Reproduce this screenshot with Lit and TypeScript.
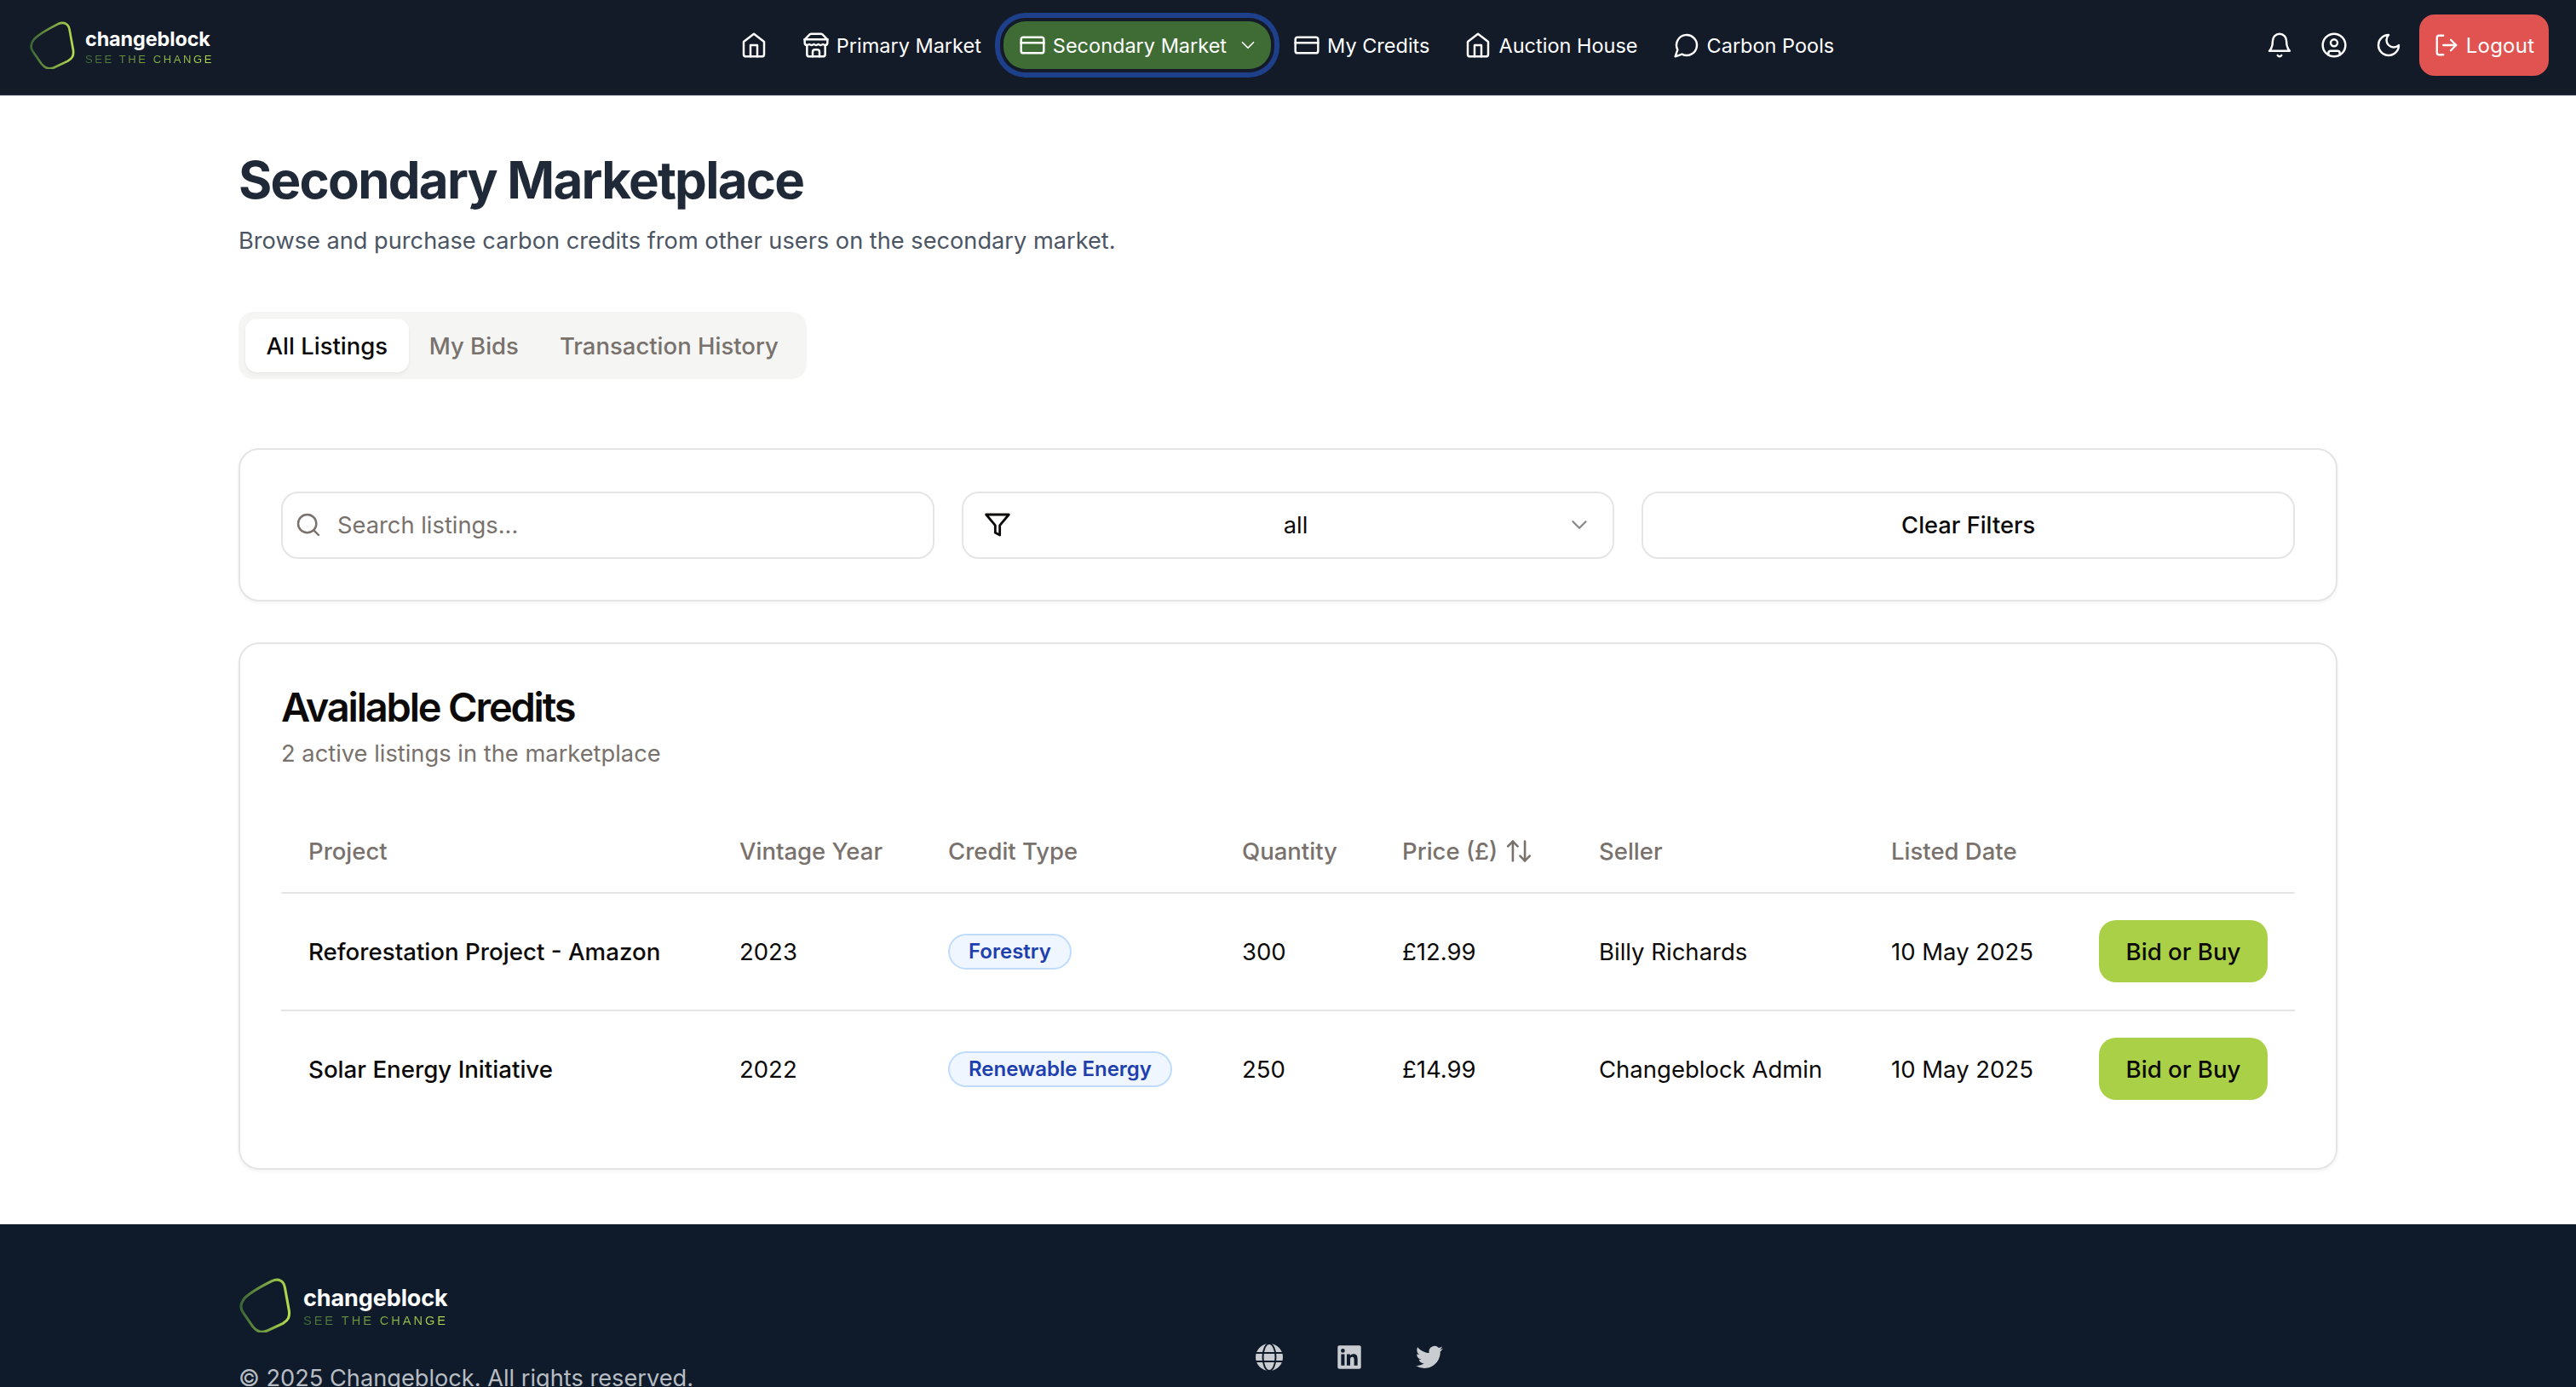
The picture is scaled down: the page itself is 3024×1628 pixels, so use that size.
import { LitElement, html, css, svg } from "lit";
import { customElement } from "lit/decorators.js";

const ic = (body: unknown, cls = "ic") => html`<svg class=${cls} viewBox="0 0 24 24" fill="none" stroke="currentColor" stroke-width="2" stroke-linecap="round" stroke-linejoin="round">${body}</svg>`;

const homeI = svg`<path d="m3 9 9-7 9 7v11a2 2 0 0 1-2 2H5a2 2 0 0 1-2-2z"/><path d="M9 22V12h6v10"/>`;
const storeI = svg`<path d="m2 7 4.41-4.41A2 2 0 0 1 7.83 2h8.34a2 2 0 0 1 1.42.59L22 7"/><path d="M4 12v8a2 2 0 0 0 2 2h12a2 2 0 0 0 2-2v-8"/><path d="M15 22v-4a2 2 0 0 0-2-2h-2a2 2 0 0 0-2 2v4"/><path d="M2 7h20"/><path d="M22 7v3a2 2 0 0 1-2 2 2.7 2.7 0 0 1-1.59-.63.7.7 0 0 0-.82 0A2.7 2.7 0 0 1 16 12a2.7 2.7 0 0 1-1.59-.63.7.7 0 0 0-.82 0A2.7 2.7 0 0 1 12 12a2.7 2.7 0 0 1-1.59-.63.7.7 0 0 0-.82 0A2.7 2.7 0 0 1 8 12a2.7 2.7 0 0 1-1.59-.63.7.7 0 0 0-.82 0A2.7 2.7 0 0 1 4 12a2 2 0 0 1-2-2V7"/>`;
const cardI = svg`<rect x="2" y="5" width="20" height="14" rx="2"/><path d="M2 10h20"/>`;
const msgI = svg`<path d="M7.9 20A9 9 0 1 0 4 16.1L2 22Z"/>`;
const bellI = svg`<path d="M6 8a6 6 0 0 1 12 0c0 7 3 9 3 9H3s3-2 3-9"/><path d="M10.3 21a1.94 1.94 0 0 0 3.4 0"/>`;
const userI = svg`<circle cx="12" cy="12" r="10"/><circle cx="12" cy="10" r="3"/><path d="M7 20.66V19a2 2 0 0 1 2-2h6a2 2 0 0 1 2 2v1.66"/>`;
const moonI = svg`<path d="M12 3a6 6 0 0 0 9 9 9 9 0 1 1-9-9Z"/>`;
const logoutI = svg`<path d="M9 21H5a2 2 0 0 1-2-2V5a2 2 0 0 1 2-2h4"/><path d="m16 17 5-5-5-5"/><path d="M21 12H9"/>`;
const searchI = svg`<circle cx="11" cy="11" r="8"/><path d="m21 21-4.3-4.3"/>`;
const filterI = svg`<path d="M22 3H2l8 9.46V19l4 2v-8.54Z"/>`;
const chevI = svg`<path d="m6 9 6 6 6-6"/>`;
const sortI = svg`<path d="m21 16-4 4-4-4"/><path d="M17 20V4"/><path d="m3 8 4-4 4 4"/><path d="M7 4v16"/>`;

const logo = (id: string) => html`<svg class="mark" viewBox="0 0 54 54" fill="none">
  <defs><linearGradient id=${id} x1="0" y1="0" x2="1" y2="0">
    <stop offset="0" stop-color="#3b6636"/><stop offset="1" stop-color="#b4dc4f"/></linearGradient></defs>
  <path d="M6 20C13 13 25 7 33 3C40 0 45 3 46 10L50 32C51 39 49 42 44 45L29 52C23 55 18 53 14 48L5 35C1 30 2 25 6 20Z" stroke="url(#${id})" stroke-width="2.6"/>
</svg>`;

const rows = [
  { p: "Reforestation Project - Amazon", y: "2023", t: "Forestry", q: "300", pr: "£12.99", s: "Billy Richards", d: "10 May 2025" },
  { p: "Solar Energy Initiative", y: "2022", t: "Renewable Energy", q: "250", pr: "£14.99", s: "Changeblock Admin", d: "10 May 2025" },
];

@customElement("app-root")
export class AppRoot extends LitElement {
  static styles = css`
    :host { display: block; width: 3024px; height: 1628px; overflow: hidden; background: #fff; font-family: Inter, "Liberation Sans", sans-serif; color: #0c0a09; font-size: 27px; }
    * { box-sizing: border-box; }
    .ic { width: 32px; height: 32px; flex: none; stroke-width: 1.85; }

    header { height: 112px; padding-bottom: 4px; border-bottom: 2px solid #1d2433; background: #131a28; display: grid; grid-template-columns: 1fr auto 1fr; align-items: center; color: #fff; }
    .brand { display: flex; align-items: center; gap: 10px; padding-left: 34px; }
    .mark { width: 56px; height: 56px; flex: none; }
    .words { display: flex; flex-direction: column; }
    .name { font-weight: 700; font-size: 23.4px; line-height: 28px; margin-top: 3px; letter-spacing: -0.1px; color: #fff; }
    .tag { font-size: 13px; line-height: 16px; letter-spacing: 2.6px; margin-top: 2px; font-family: "Liberation Sans", sans-serif; background: linear-gradient(90deg, #3f6a38, #b4dc4f); -webkit-background-clip: text; background-clip: text; color: transparent; white-space: nowrap; }
    nav { display: flex; align-items: center; gap: 17px; margin-left: -2px; }
    .item { display: flex; align-items: center; gap: 8px; height: 56px; padding: 0 12px; border-radius: 26px; font-size: 23.5px; white-space: nowrap; color: #fff; }
    .item.active { padding: 0 14px 0 18px; margin: 0 -3px; background: #3f6b35; box-shadow: 0 0 0 4px #141a28, 0 0 0 10px #1e3f8a; }
    .chev { width: 26px; height: 26px; flex: none; margin-left: 4px; stroke-width: 1.6; }
    .right { display: flex; align-items: center; justify-content: flex-end; padding-right: 32px; }
    .tool { width: 32px; height: 32px; margin-right: 32px; }
    .tool:nth-child(3) { margin-right: 20px; }
    .logout { height: 72px; width: 152px; border-radius: 18px; background: #e05350; display: flex; align-items: center; justify-content: center; gap: 8px; font-size: 24px; letter-spacing: 0.25px; color: #fff; }
    .logout .ic { width: 30px; height: 30px; }

    main { padding: 64px 280px 64px; }
    h1 { margin: 0; font-size: 60px; line-height: 71px; font-weight: 700; letter-spacing: -1.75px; color: #1f2937; }
    .lead { margin: 15px 0 0; font-size: 27.2px; line-height: 41px; color: #4b5563; }
    .tabs { margin-top: 63px; width: 667px; height: 79px; padding: 8px; border-radius: 18px; background: #f5f5f4; display: flex; align-items: center; }
    .tab { height: 63px; padding: 0 24.5px; display: flex; align-items: center; border-radius: 14px; color: #78716c; font-size: 27.5px; font-weight: 500; white-space: nowrap; }
    .tab:not(.on) { padding: 0 24px; }
    .tab.on { background: #fff; color: #0c0a09; box-shadow: 0 2px 4px rgba(0,0,0,.06); }

    .card { border: 2px solid #e5e5e5; border-radius: 24px; background: #fff; box-shadow: 0 2px 4px rgba(0,0,0,.05); padding: 48px; }
    .filters { margin-top: 81px; height: 180px; display: grid; grid-template-columns: repeat(3, 1fr); gap: 32px; align-items: center; }
    .ctl { height: 79px; border: 2px solid #e5e5e5; border-radius: 20px; display: flex; align-items: center; position: relative; font-size: 27.3px; }
    .search { padding-left: 14px; gap: 18px; color: #78716c; }
    .search .ic { width: 32px; height: 32px; }
    .select { padding: 0 24px; justify-content: space-between; }
    .select .ic { width: 32px; height: 32px; color: #0c0a09; stroke-width: 2.1; }
    .select .sv { flex: 1; text-align: center; padding-left: 16px; }
    .select .chev { width: 30px; height: 30px; margin: 0; color: #8a8a8a; stroke-width: 1.85; }
    .clear { justify-content: center; font-weight: 500; }

    .list { margin-top: 48px; height: 619px; }
    h2 { margin: 0; font-size: 47px; line-height: 52px; font-weight: 600; letter-spacing: -2.2px; color: #0c0a09; }
    .sub { margin-top: 14px; font-size: 27.3px; line-height: 30px; color: #78716c; }
    table { margin-top: 50px; width: 100%; table-layout: fixed; border-collapse: collapse; }
    .c1 { width: 506px; } .c2 { width: 245px; } .c3 { width: 345px; } .c4 { width: 188px; }
    .c5 { width: 231px; } .c6 { width: 343px; } .c7 { width: 244px; } .c8 { width: 262px; }
    th { height: 98px; padding: 1px 32px 0; text-align: left; font-weight: 500; color: #78716c; font-size: 27.5px; border-bottom: 2px solid #e5e5e5; white-space: nowrap; }
    th .in { display: inline-flex; align-items: center; gap: 8px; }
    th .ic { width: 34px; height: 34px; }
    td { height: 137.5px; padding: 0 32px; font-size: 27.5px; border-bottom: 2px solid #e5e5e5; white-space: nowrap; }
    tbody tr:last-child td { border-bottom: none; }
    td.proj { font-weight: 500; font-size: 27.7px; }
    .badge { display: inline-block; padding: 0 22px; height: 42px; line-height: 38px; border-radius: 21px; border: 2px solid #bfdbfe; background: #eff6ff; color: #1e40af; font-size: 24px; font-weight: 600; }
    .buy { width: 198px; height: 73px; border-radius: 20px; background: #a9d046; color: #0c0a09; display: flex; align-items: center; justify-content: center; font-weight: 500; font-size: 27.6px; }

    footer { height: 191px; background: #0f1b2a; padding: 65px 0 0 280px; display: grid; grid-template-columns: 1194px auto; align-items: start; }
    footer .brand { padding-left: 0; gap: 12px; }
    footer .mark { width: 64px; height: 64px; margin-top: -2px; }
    footer .name { font-size: 27px; line-height: 32px; margin-top: 0; }
    footer .tag { font-size: 14.6px; letter-spacing: 2.95px; margin-top: 2px; }
    .copy { margin: 34px 0 0; font-size: 27.2px; line-height: 40px; color: #b8bcc3; white-space: nowrap; }
    .social { display: flex; gap: 62px; padding-top: 75px; color: #c9ccd1; }
    .social svg { width: 32px; height: 32px; display: block; fill: currentColor; }
  `;

  render() {
    return html`
      <header>
        <div class="brand">${logo("g1")}<div class="words"><span class="name">changeblock</span><span class="tag">SEE THE CHANGE</span></div></div>
        <nav>
          <div class="item">${ic(homeI)}</div>
          <div class="item">${ic(storeI)}Primary Market</div>
          <div class="item active">${ic(cardI)}Secondary Market${ic(chevI, "chev")}</div>
          <div class="item">${ic(cardI)}My Credits</div>
          <div class="item">${ic(homeI)}Auction House</div>
          <div class="item">${ic(msgI)}Carbon Pools</div>
        </nav>
        <div class="right">
          ${ic(bellI, "ic tool")}${ic(userI, "ic tool")}${ic(moonI, "ic tool")}
          <div class="logout">${ic(logoutI)}Logout</div>
        </div>
      </header>
      <main>
        <h1>Secondary Marketplace</h1>
        <p class="lead">Browse and purchase carbon credits from other users on the secondary market.</p>
        <div class="tabs">
          <div class="tab on">All Listings</div><div class="tab">My Bids</div><div class="tab">Transaction History</div>
        </div>
        <section class="card filters">
          <div class="ctl search">${ic(searchI)}Search listings...</div>
          <div class="ctl select">${ic(filterI)}<span class="sv">all</span>${ic(chevI, "chev")}</div>
          <div class="ctl clear">Clear Filters</div>
        </section>
        <section class="card list">
          <h2>Available Credits</h2>
          <div class="sub">2 active listings in the marketplace</div>
          <table>
            <colgroup><col class="c1"/><col class="c2"/><col class="c3"/><col class="c4"/><col class="c5"/><col class="c6"/><col class="c7"/><col class="c8"/></colgroup>
            <thead><tr>
              <th>Project</th><th>Vintage Year</th><th>Credit Type</th><th>Quantity</th>
              <th><span class="in">Price (£)${ic(sortI)}</span></th><th>Seller</th><th>Listed Date</th><th></th>
            </tr></thead>
            <tbody>
              ${rows.map((r) => html`<tr>
                <td class="proj">${r.p}</td><td>${r.y}</td><td><span class="badge">${r.t}</span></td><td>${r.q}</td>
                <td>${r.pr}</td><td>${r.s}</td><td>${r.d}</td><td><div class="buy">Bid or Buy</div></td>
              </tr>`)}
            </tbody>
          </table>
        </section>
      </main>
      <footer>
        <div>
          <div class="brand">${logo("g2")}<div class="words"><span class="name">changeblock</span><span class="tag">SEE THE CHANGE</span></div></div>
          <p class="copy">© 2025 Changeblock. All rights reserved.</p>
        </div>
        <div class="social">
          <svg viewBox="0 0 32 32"><circle cx="16" cy="16" r="16"/><g fill="none" stroke="#0f1b2a" stroke-width="2"><ellipse cx="16" cy="16" rx="7.5" ry="16"/><path d="M0 11h32M0 21h32"/></g></svg>
          <svg viewBox="-2 -2 28 28"><path d="M20.447 20.452h-3.554v-5.569c0-1.328-.027-3.037-1.852-3.037-1.853 0-2.136 1.445-2.136 2.939v5.667H9.351V9h3.414v1.561h.046c.477-.9 1.637-1.85 3.37-1.85 3.601 0 4.267 2.37 4.267 5.455v6.286zM5.337 7.433a2.062 2.062 0 01-2.063-2.065 2.064 2.064 0 112.063 2.065zm1.782 13.019H3.555V9h3.564v11.452zM22.225 0H1.771C.792 0 0 .774 0 1.729v20.542C0 23.227.792 24 1.771 24h20.451C23.2 24 24 23.227 24 22.271V1.729C24 .774 23.2 0 22.222 0h.003z"/></svg>
          <svg viewBox="0 0 24 24"><path d="M23.953 4.57a10 10 0 01-2.825.775 4.958 4.958 0 002.163-2.723c-.951.555-2.005.959-3.127 1.184a4.92 4.92 0 00-8.384 4.482C7.69 8.095 4.067 6.13 1.64 3.162a4.822 4.822 0 00-.666 2.475c0 1.71.87 3.213 2.188 4.096a4.904 4.904 0 01-2.228-.616v.06a4.923 4.923 0 003.946 4.827 4.996 4.996 0 01-2.212.085 4.936 4.936 0 004.604 3.417 9.867 9.867 0 01-6.102 2.105c-.39 0-.779-.023-1.17-.067a13.995 13.995 0 007.557 2.209c9.053 0 13.998-7.496 13.998-13.985 0-.21 0-.42-.015-.63A9.935 9.935 0 0024 4.59z"/></svg>
        </div>
      </footer>
    `;
  }
}
